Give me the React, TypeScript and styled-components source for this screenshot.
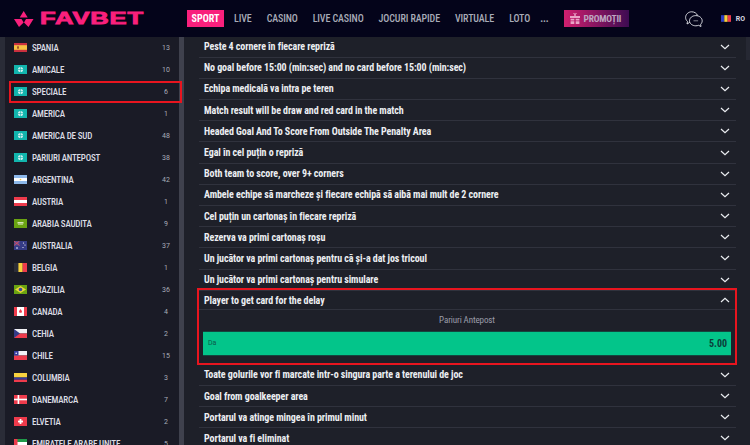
import { ReactNode } from "react";
import styled, { createGlobalStyle } from "styled-components";

const GlobalStyle = createGlobalStyle`
  html, body {
    margin: 0;
    height: 445px;
    overflow: hidden;
    background: #1e2029;
    font-family: Roboto, "Liberation Sans", sans-serif;
  }
`;

const flags: Record<string, ReactNode> = {
  es: (
    <>
      <rect width="13" height="9" fill="#c9303e" />
      <rect y="2.2" width="13" height="4.6" fill="#f5c242" />
      <rect x="3" y="3.3" width="2" height="2.4" fill="#a5562c" />
    </>
  ),
  world: (
    <>
      <rect width="13" height="9" fill="#12b5ad" />
      <circle cx="6.5" cy="4.5" r="2.6" fill="#cdeeee" />
      <path d="M3.9 4.5h5.2M6.5 1.9v5.2" stroke="#12b5ad" strokeWidth=".6" />
    </>
  ),
  ar: (
    <>
      <rect width="13" height="9" fill="#8db8ea" />
      <rect y="3" width="13" height="3" fill="#fff" />
      <circle cx="6.5" cy="4.5" r=".8" fill="#f0c040" />
    </>
  ),
  at: (
    <>
      <rect width="13" height="9" fill="#ee3b4c" />
      <rect y="3" width="13" height="3" fill="#fff" />
    </>
  ),
  sa: (
    <>
      <rect width="13" height="9" fill="#6aa312" />
      <rect x="3.5" y="3" width="6" height="1.6" fill="#d4e4b5" />
      <rect x="4" y="5.4" width="5" height=".6" fill="#d4e4b5" />
    </>
  ),
  au: (
    <>
      <rect width="13" height="9" fill="#353b86" />
      <rect width="5.5" height="4.5" fill="#5a4f8e" />
      <path d="M0 0l5.5 4.5M5.5 0L0 4.5" stroke="#e8495a" strokeWidth=".8" />
      <circle cx="9.5" cy="2" r=".6" fill="#fff" />
      <circle cx="11" cy="4" r=".6" fill="#fff" />
      <circle cx="9" cy="6.5" r=".6" fill="#fff" />
      <circle cx="3" cy="7" r=".8" fill="#fff" />
    </>
  ),
  be: (
    <>
      <rect width="4.4" height="9" fill="#2b2d38" />
      <rect x="4.4" width="4.3" height="9" fill="#f7d23e" />
      <rect x="8.7" width="4.3" height="9" fill="#ee3b4c" />
    </>
  ),
  br: (
    <>
      <rect width="13" height="9" fill="#6aa312" />
      <path d="M6.5 1L12 4.5 6.5 8 1 4.5z" fill="#e9d53a" />
      <circle cx="6.5" cy="4.5" r="1.8" fill="#3a4a9c" />
    </>
  ),
  ca: (
    <>
      <rect width="13" height="9" fill="#fff" />
      <rect width="3" height="9" fill="#ee3b4c" />
      <rect x="10" width="3" height="9" fill="#ee3b4c" />
      <path d="M6.5 2l1.5 2.2-.4 1.600H5.400L5 4.200z" fill="#ee3b4c" />
    </>
  ),
  cz: (
    <>
      <rect width="13" height="4.5" fill="#f1f1f5" />
      <rect y="4.5" width="13" height="4.5" fill="#ee3b4c" />
      <path d="M0 0l6 4.5L0 9z" fill="#353b86" />
    </>
  ),
  cl: (
    <>
      <rect width="13" height="4.5" fill="#f1f1f5" />
      <rect y="4.5" width="13" height="4.5" fill="#ee3b4c" />
      <rect width="4.5" height="4.5" fill="#353b9c" />
      <circle cx="2.2" cy="2.2" r=".8" fill="#fff" />
    </>
  ),
  co: (
    <>
      <rect width="13" height="4.5" fill="#f7d23e" />
      <rect y="4.5" width="13" height="2.2" fill="#353b9c" />
      <rect y="6.7" width="13" height="2.3" fill="#ee3b4c" />
    </>
  ),
  dk: (
    <>
      <rect width="13" height="9" fill="#ee3b4c" />
      <rect x="3.6" width="1.6" height="9" fill="#fff" />
      <rect y="3.7" width="13" height="1.6" fill="#fff" />
    </>
  ),
  ch: (
    <>
      <rect width="13" height="9" fill="#ee3b4c" />
      <rect x="5.6" y="2" width="1.8" height="5" fill="#fff" />
      <rect x="4" y="3.6" width="5" height="1.8" fill="#fff" />
    </>
  ),
  ae: (
    <>
      <rect width="13" height="3" fill="#1f9a4a" />
      <rect y="3" width="13" height="3" fill="#fff" />
      <rect y="6" width="13" height="3" fill="#2b2d38" />
      <rect width="3.5" height="9" fill="#ee3b4c" />
    </>
  ),
};

const leagues = [
  { name: "SPANIA", count: 13, flag: "es" },
  { name: "AMICALE", count: 10, flag: "world" },
  { name: "SPECIALE", count: 6, flag: "world", marked: true },
  { name: "AMERICA", count: 1, flag: "world" },
  { name: "AMERICA DE SUD", count: 48, flag: "world" },
  { name: "PARIURI ANTEPOST", count: 38, flag: "world" },
  { name: "ARGENTINA", count: 42, flag: "ar" },
  { name: "AUSTRIA", count: 1, flag: "at" },
  { name: "ARABIA SAUDITA", count: 9, flag: "sa" },
  { name: "AUSTRALIA", count: 37, flag: "au" },
  { name: "BELGIA", count: 1, flag: "be" },
  { name: "BRAZILIA", count: 36, flag: "br" },
  { name: "CANADA", count: 4, flag: "ca" },
  { name: "CEHIA", count: 2, flag: "cz" },
  { name: "CHILE", count: 15, flag: "cl" },
  { name: "COLUMBIA", count: 3, flag: "co" },
  { name: "DANEMARCA", count: 7, flag: "dk" },
  { name: "ELVETIA", count: 2, flag: "ch" },
  { name: "EMIRATELE ARABE UNITE", count: 5, flag: "ae" },
];

const marketsBefore = [
  "Peste 4 cornere în fiecare repriză",
  "No goal before 15:00 (min:sec) and no card before 15:00 (min:sec)",
  "Echipa medicală va intra pe teren",
  "Match result will be draw and red card in the match",
  "Headed Goal And To Score From Outside The Penalty Area",
  "Egal în cel puțin o repriză",
  "Both team to score, over 9+ corners",
  "Ambele echipe să marcheze și fiecare echipă să aibă mai mult de 2 cornere",
  "Cel puțin un cartonaș în fiecare repriză",
  "Rezerva va primi cartonaș roșu",
  "Un jucător va primi cartonaș pentru că și-a dat jos tricoul",
  "Un jucător va primi cartonaș pentru simulare",
];

const marketsAfter = [
  "Toate golurile vor fi marcate intr-o singura parte a terenului de joc",
  "Goal from goalkeeper area",
  "Portarul va atinge mingea în primul minut",
  "Portarul va fi eliminat",
];

const navItems = ["LIVE", "CASINO", "LIVE CASINO", "JOCURI RAPIDE", "VIRTUALE", "LOTO"];

function Chevron({ up }: { up?: boolean }) {
  return (
    <ChevronIcon viewBox="0 0 10 6" $up={up}>
      <path d="M1 1l4 3.6L9 1" fill="none" stroke="#eceef2" strokeWidth="1.2" />
    </ChevronIcon>
  );
}

function App() {
  return (
    <Page>
      <GlobalStyle />
      <Header>
        <Logo>
          <svg width="20" height="16" viewBox="0 0 20 16">
            <path
              d="M9.700 0l4 6.500h-8zM0 8h7.500l2.200 3.400L5 16zM19.500 8H12l-2 3.400L14.500 16z"
              fill="#f9207c"
            />
          </svg>
          <LogoText>FAVBET</LogoText>
        </Logo>
        <Nav>
          <SportButton>SPORT</SportButton>
          {navItems.map((item) => (
            <NavLink key={item}>{item}</NavLink>
          ))}
          <MoreDots>...</MoreDots>
          <PromoButton>
            <svg width="10" height="11" viewBox="0 0 10 11">
              <path
                d="M0 3h4.300V1.500L3 0h1.200l.8 1 .8-1H7L5.700 1.500V3H10v2H0zM.6 5.800h3.700v1.600H.6zM5.700 5.800h3.700v1.600H5.700zM.6 8.200h3.700V11H.6zM5.700 8.200h3.700V11H5.700z"
                fill="#e9a4c6"
              />
            </svg>
            PROMOȚII
          </PromoButton>
        </Nav>
        <HeaderRight>
          <svg width="18" height="16" viewBox="0 0 18 16" fill="none" stroke="#e8e9ee" strokeWidth=".9">
            <path d="M5 11.500H4.600L2 13l.5-2.600C1.300 9.500 .6 8 .6 6.500.6 3.400 3.300 .8 6.700 .8c2.700 0 5 1.500 5.900 3.700" />
            <path d="M10.800 4.600c3.500 0 6.400 2.300 6.400 5.200 0 1.400-.6 2.600-1.600 3.500l.4 2.200-2.500-1.200c-.8.300-1.700.5-2.700.5-3.500 0-6.300-2.300-6.300-5 0-2.900 2.800-5.200 6.300-5.200z" />
            <path d="M8.500 9.800h4.600" stroke="#8d8f9b" />
          </svg>
          <LangBox>
            <svg width="10" height="7" viewBox="0 0 9 6">
              <rect width="3" height="6" fill="#2b3cc0" />
              <rect x="3" width="3" height="6" fill="#f7d23e" />
              <rect x="6" width="3" height="6" fill="#ee3b4c" />
            </svg>
            RO
          </LangBox>
        </HeaderRight>
      </Header>

      <Body>
        <Sidebar>
          <LeagueList>
            {leagues.map((l) => (
              <LeagueRow key={l.name} $marked={l.marked}>
                <svg width="13" height="9" viewBox="0 0 13 9">
                  {flags[l.flag]}
                </svg>
                <LeagueName>{l.name}</LeagueName>
                <LeagueCount>{l.count}</LeagueCount>
              </LeagueRow>
            ))}
          </LeagueList>
          <SideScroll />
        </Sidebar>

        <Main>
          {marketsBefore.map((m) => (
            <MarketRow key={m}>
              <MarketTitle>{m}</MarketTitle>
              <Chevron />
            </MarketRow>
          ))}
          <OpenMarket>
            <OpenHead>
              <MarketTitle>Player to get card for the delay</MarketTitle>
              <Chevron up />
            </OpenHead>
            <OpenLabel>Pariuri Antepost</OpenLabel>
            <OddButton>
              <OddName>Da</OddName>
              <OddValue>5.00</OddValue>
            </OddButton>
          </OpenMarket>
          {marketsAfter.map((m) => (
            <MarketRow key={m}>
              <MarketTitle>{m}</MarketTitle>
              <Chevron />
            </MarketRow>
          ))}
        </Main>

        <PageScroll />
      </Body>
    </Page>
  );
}

export default App;

const Page = styled.div`
  width: 750px;
  height: 445px;
  overflow: hidden;
  display: flex;
  flex-direction: column;
`;

const Header = styled.header`
  flex: 0 0 37px;
  display: flex;
  align-items: center;
  background: #04041a;
`;

const Logo = styled.div`
  width: 187px;
  box-sizing: border-box;
  padding-left: 14px;
  display: flex;
  align-items: center;
  gap: 6px;
`;

const LogoText = styled.span`
  display: inline-block;
  font-family: "Liberation Sans", sans-serif;
  font-weight: 700;
  font-size: 16px;
  letter-spacing: 0.5px;
  color: #f9207c;
  -webkit-text-stroke: 0.8px #f9207c;
  transform: scaleX(1.6);
  transform-origin: left center;
`;

const Nav = styled.nav`
  display: flex;
  align-items: center;
  gap: 15px;
`;

const NavLink = styled.span`
  font-size: 10px;
  font-weight: 500;
  font-stretch: 85%;
  letter-spacing: -0.1px;
  color: #a9acb8;
  white-space: nowrap;
`;

const MoreDots = styled(NavLink)`
  margin-left: -5px;
  font-weight: 700;
`;

const SportButton = styled.span`
  margin-right: -5px;
  width: 37px;
  height: 17px;
  display: flex;
  align-items: center;
  justify-content: center;
  background: #f9207c;
  color: #fff;
  font-size: 10px;
  font-weight: 700;
  font-stretch: 85%;
`;

const PromoButton = styled.span`
  width: 65px;
  height: 17px;
  display: flex;
  align-items: center;
  gap: 4px;
  box-sizing: border-box;
  padding-left: 6px;
  background: linear-gradient(90deg, #d1206f, #3d0b52);
  color: #bda6c0;
  font-size: 9.5px;
  font-weight: 700;
  font-stretch: 85%;
  letter-spacing: -0.2px;
  white-space: nowrap;
`;

const HeaderRight = styled.div`
  margin-left: auto;
  padding-right: 5px;
  display: flex;
  align-items: center;
  gap: 18px;
`;

const LangBox = styled.span`
  display: flex;
  align-items: center;
  gap: 5px;
  font-size: 7px;
  font-weight: 700;
  color: #d6d8e0;
`;

const Body = styled.div`
  flex: 1;
  min-height: 0;
  display: flex;
  overflow: hidden;
`;

const Sidebar = styled.aside`
  flex: 0 0 184px;
  box-sizing: border-box;
  margin-right: 13px;
  padding-left: 5px;
  display: flex;
  overflow: hidden;
`;

const LeagueList = styled.div`
  flex: 1;
  margin-top: -0.5px;
  padding-left: 5px;
  background: #1a1b26;
  border-left: 5px solid #2a2c37;
  margin-left: -5px;
`;

const LeagueRow = styled.div<{ $marked?: boolean }>`
  height: 22px;
  box-sizing: border-box;
  padding: 0 6px 0 4px;
  display: flex;
  align-items: center;
  gap: 5px;
  ${(p) =>
    p.$marked &&
    "position: relative; z-index: 1; outline: 2px solid #e8151f; outline-offset: -2px; margin: 0 -3px 0 -1px; padding: 0 9px 0 5px;"}
`;

const LeagueName = styled.span`
  flex: 1;
  font-size: 9px;
  font-weight: 500;
  font-stretch: 85%;
  letter-spacing: -0.2px;
  color: #dcdde4;
  white-space: nowrap;
`;

const LeagueCount = styled.span`
  width: 14px;
  text-align: center;
  font-size: 7px;
  color: #a9acb8;
`;

const SideScroll = styled.div`
  flex: 0 0 5px;
  background: #3f414d;
`;

const Main = styled.main`
  flex: 0 0 540px;
  margin-top: -0.5px;
  height: 500px;
`;

const MarketRow = styled.div`
  height: 21.2px;
  box-sizing: border-box;
  margin: 0 1px 0 2px;
  padding: 0 6px 0 5px;
  display: flex;
  align-items: center;
  justify-content: space-between;
  border-bottom: 1px solid #30323d;
`;

const MarketTitle = styled.span`
  font-size: 10px;
  font-weight: 700;
  font-stretch: 85%;
  letter-spacing: -0.08px;
  color: #eceef2;
  white-space: nowrap;
`;

const ChevronIcon = styled.svg<{ $up?: boolean }>`
  width: 10px;
  height: 6px;
  ${(p) => p.$up && "transform: rotate(180deg);"}
`;

const OpenMarket = styled.section`
  height: 77px;
  box-sizing: border-box;
  border: 2px solid #e8151f;
  display: flex;
  flex-direction: column;
  margin-top: -3px;
`;

const OpenHead = styled.div`
  flex: 0 0 20px;
  box-sizing: border-box;
  padding: 2px 5px 0 5px;
  display: flex;
  align-items: center;
  justify-content: space-between;
  border-bottom: 1px solid #30323d;
`;

const OpenLabel = styled.div`
  height: 21px;
  display: flex;
  align-items: center;
  justify-content: center;
  font-size: 9px;
  font-stretch: 85%;
  letter-spacing: -0.1px;
  color: #9c9ea9;
`;

const OddButton = styled.div`
  margin: 0 4px;
  height: 25px;
  box-sizing: border-box;
  padding: 0 4px 0 5px;
  display: flex;
  align-items: center;
  justify-content: space-between;
  background: #03c58a;
  border: 1px solid #14453f;
  border-width: 1px 0;
`;

const OddName = styled.span`
  font-size: 7px;
  color: #0d5a4a;
`;

const OddValue = styled.span`
  font-size: 10px;
  font-weight: 700;
  font-stretch: 85%;
  color: #0c3d3a;
`;

const PageScroll = styled.div`
  flex: 0 0 4px;
  margin-left: 9px;
  height: 23px;
  background: #262833;
`;
